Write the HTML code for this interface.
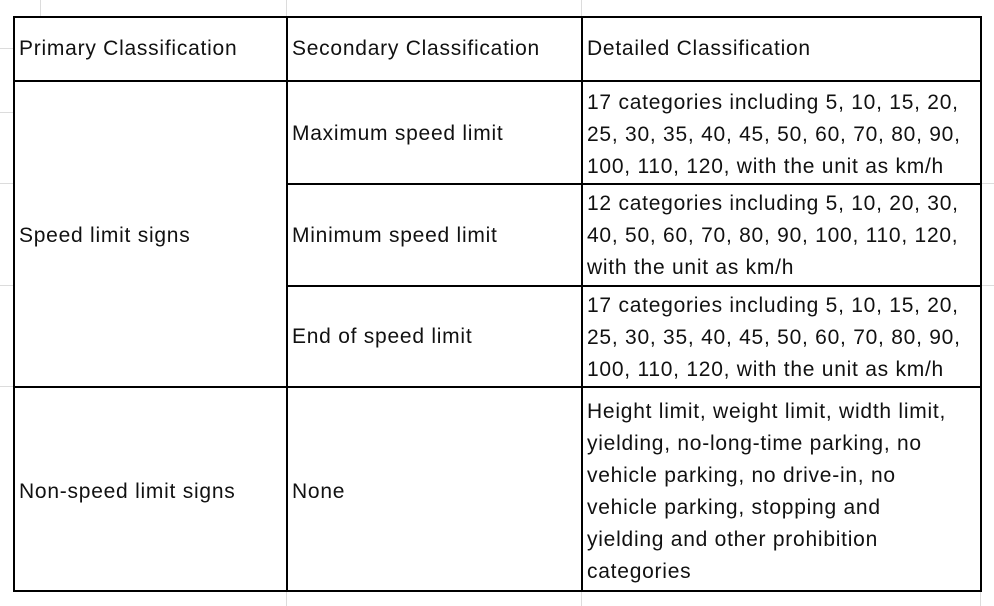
<!DOCTYPE html>
<html><head><meta charset="utf-8"><style>
html,body{margin:0;padding:0;background:#fff;width:994px;height:606px;overflow:hidden;position:relative;font-family:"Liberation Sans","Noto Sans CJK SC",sans-serif;color:#111}
.h{position:absolute;height:2px;background:#000}
.v{position:absolute;width:2px;background:#000}
.gh{position:absolute;height:1px;background:#dcdcdc}
.gv{position:absolute;width:1px;background:#dcdcdc}
.t{position:absolute;font-size:21px;letter-spacing:0.75px;line-height:32px;white-space:nowrap}
</style></head><body>
<div class="gv" style="left:40px;top:0;height:16px"></div>
<div class="gv" style="left:286px;top:0;height:16px"></div>
<div class="gv" style="left:581px;top:0;height:16px"></div>
<div class="gv" style="left:286px;top:592px;height:14px"></div>
<div class="gv" style="left:581px;top:592px;height:14px"></div>
<div class="gv" style="left:980px;top:592px;height:14px"></div>
<div class="gh" style="left:0;top:48px;width:13px"></div>
<div class="gh" style="left:0;top:112px;width:13px"></div>
<div class="gh" style="left:0;top:183px;width:13px"></div>
<div class="gh" style="left:0;top:285px;width:13px"></div>
<div class="gh" style="left:0;top:386px;width:13px"></div>
<div class="gh" style="left:980px;top:183px;width:14px"></div>
<div class="gh" style="left:980px;top:285px;width:14px"></div>

<div class="h" style="left:13px;top:16px;width:969px"></div>
<div class="h" style="left:13px;top:80px;width:969px"></div>
<div class="h" style="left:286px;top:183px;width:696px"></div>
<div class="h" style="left:286px;top:285px;width:696px"></div>
<div class="h" style="left:13px;top:386px;width:969px"></div>
<div class="h" style="left:13px;top:590px;width:969px"></div>
<div class="v" style="left:13px;top:16px;height:576px"></div>
<div class="v" style="left:286px;top:16px;height:576px"></div>
<div class="v" style="left:581px;top:16px;height:576px"></div>
<div class="v" style="left:980px;top:16px;height:576px"></div>

<div class="t" style="left:19px;top:33px">Primary Classification</div>
<div class="t" style="left:292px;top:33px">Secondary Classification</div>
<div class="t" style="left:587px;top:33px">Detailed Classification</div>

<div class="t" style="left:587px;top:87px">17 categories including 5, 10, 15, 20,<br>25, 30, 35, 40, 45, 50, 60, 70, 80, 90,<br>100, 110, 120, with the unit as km/h</div>
<div class="t" style="left:292px;top:118px">Maximum speed limit</div>

<div class="t" style="left:19px;top:220px">Speed limit signs</div>
<div class="t" style="left:587px;top:188px">12 categories including 5, 10, 20, 30,<br>40, 50, 60, 70, 80, 90, 100, 110, 120,<br>with the unit as km/h</div>
<div class="t" style="left:292px;top:220px">Minimum speed limit</div>

<div class="t" style="left:587px;top:290px">17 categories including 5, 10, 15, 20,<br>25, 30, 35, 40, 45, 50, 60, 70, 80, 90,<br>100, 110, 120, with the unit as km/h</div>
<div class="t" style="left:292px;top:321px">End of speed limit</div>

<div class="t" style="left:19px;top:476px">Non-speed limit signs</div>
<div class="t" style="left:292px;top:476px">None</div>
<div class="t" style="left:587px;top:396px">Height limit, weight limit, width limit,<br>yielding, no-long-time parking, no<br>vehicle parking, no drive-in, no<br>vehicle parking, stopping and<br>yielding and other prohibition<br>categories</div>
</body></html>
